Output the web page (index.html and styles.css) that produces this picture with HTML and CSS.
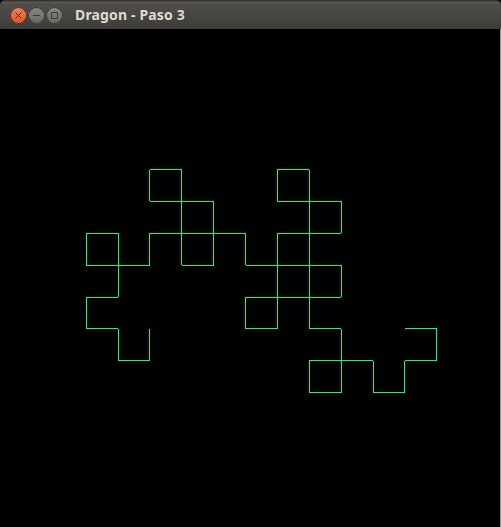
FILE: index.html
```html
<!DOCTYPE html>
<html lang="es">
<head>
<meta charset="utf-8">
<title>Dragon - Paso 3</title>
<link rel="stylesheet" href="styles.css">
</head>
<body>
<main class="window">
<header class="titlebar">
<div class="controls">
<svg class="control close" viewBox="0 0 17 17"><path d="M5.7 5.7l5.6 5.6M11.3 5.7l-5.6 5.6"/></svg>
<svg class="control" viewBox="0 0 17 17"><path d="M5 8.5h7"/></svg>
<svg class="control" viewBox="0 0 17 17"><path d="M5.5 5.5h6v6h-6z"/></svg>
</div>
<h1 class="title">Dragon - Paso 3</h1>
</header>
<svg class="canvas" viewBox="0 29 500 498" width="500" height="498">
<!-- horizontal segments -->
<path transform="translate(0 .5)" d="M150 169H182M277 169H309M150 201H214M277 201H342M86 233H119M149 233H246M277 233H341M86 265H150M182 265H214M246 265H342M86 297H118M245 297H341M86 328H118M245 328H278M309 328H341M405 328H437M118 360H150M309 360H373M405 360H437M309 392H342M373 392H405"/>
<!-- vertical segments -->
<path transform="translate(.5 0)" d="M149 170V201M181 169V265M213 201V266M86 233V266M118 233V297M149 233V266M245 233V265M277 169V202M277 233V329M309 170V329M341 201V233M341 265V297M86 297V329M245 297V329M118 329V361M149 329V361M341 329V393M309 360V393M373 361V393M404 361V393M436 328V361"/>
</svg>
</main>
</body>
</html>
```
FILE: styles.css
```css
body {
  margin: 0;
  background: #000;
}
.window {
  box-sizing: border-box;
  width: 501px;
  height: 527px;
  overflow: hidden;
  background: linear-gradient(#3b3a35 0 29px, #8f8f8b 29px) right / 1px 100% no-repeat #000;
}
.titlebar {
  box-sizing: border-box;
  display: flex;
  align-items: flex-start;
  height: 29px;
  padding: 0 10px;
  border-top: 1px solid #35342f;
  border-radius: 5px 5px 0 0;
  background: linear-gradient(#45443f 0 1px, #5b5a54 1px 2px, #504f49 2px, #3d3c37);
  box-shadow: 0 0 0 4px #080907;
  clip-path: inset(0);
}
.controls {
  display: flex;
  gap: 1px;
  margin-top: 6px;
}
.control {
  width: 17px;
  height: 17px;
  border-radius: 50%;
  background: linear-gradient(#8b8981, #68675f);
  box-shadow: inset 0 0 0 1px #3a3934;
  fill: none;
  stroke: #393832;
  stroke-width: 1;
}
.close {
  background: linear-gradient(#f58359, #e65126);
  stroke: #58200f;
}
.title {
  margin: 4px 0 0 12px;
  color: #dfdbd2;
  font: bold 14px/20px "Noto Sans", sans-serif;
  letter-spacing: .15px;
  white-space: pre;
}
.canvas {
  display: block;
  fill: none;
  stroke: #00ff7f;
  stroke-width: 1;
  shape-rendering: crispEdges;
}
```
